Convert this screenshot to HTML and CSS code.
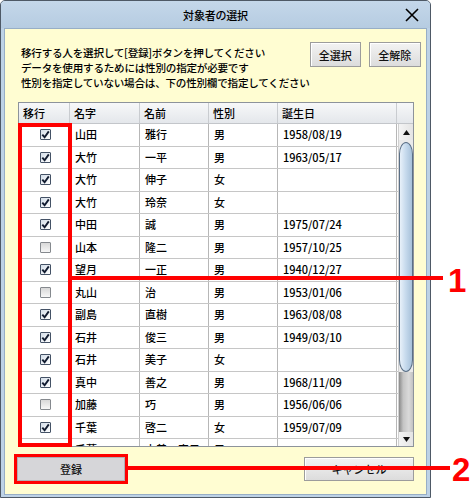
FILE: index.html
```html
<!DOCTYPE html>
<html lang="ja">
<head>
<meta charset="utf-8">
<title>対象者の選択</title>
<link rel="stylesheet" href="styles.css">
</head>
<body>
<div class="stage">
  <div class="window">
    <div class="titlebar">
      <span></span>
      <span class="title">対象者の選択</span>
      <span class="close"><svg width="14" height="14" viewBox="0 0 14 14"><path d="M1 1L13 13M13 1L1 13" stroke="#000" stroke-width="1.6" fill="none"/></svg></span>
    </div>
    <div class="content">
      <div class="top">
        <div class="intro">
          <p>移行する人を選択して[登録]ボタンを押してください</p>
          <p>データを使用するためには性別の指定が必要です</p>
          <p>性別を指定していない場合は、下の性別欄で指定してください</p>
        </div>
        <div class="topbtns">
          <button class="btn btn-sm">全選択</button>
          <button class="btn btn-sm">全解除</button>
        </div>
      </div>
      <div class="list">
        <div class="thead">
          <div class="c">移行</div><div class="c">名字</div><div class="c">名前</div><div class="c">性別</div><div class="c">誕生日</div><div class="c sbh"></div>
        </div>
        <div class="tbody">
          <div class="rows">
            <div class="row"><div class="c cbc"><span class="cb on"><svg viewBox="0 0 9 9"><path d="M1.3 4.6L3.6 7.2L7.8 1.4"/></svg></span></div><div class="c">山田</div><div class="c">雅行</div><div class="c">男</div><div class="c">1958/08/19</div></div>
            <div class="row"><div class="c cbc"><span class="cb on"><svg viewBox="0 0 9 9"><path d="M1.3 4.6L3.6 7.2L7.8 1.4"/></svg></span></div><div class="c">大竹</div><div class="c">一平</div><div class="c">男</div><div class="c">1963/05/17</div></div>
            <div class="row"><div class="c cbc"><span class="cb on"><svg viewBox="0 0 9 9"><path d="M1.3 4.6L3.6 7.2L7.8 1.4"/></svg></span></div><div class="c">大竹</div><div class="c">伸子</div><div class="c">女</div><div class="c"></div></div>
            <div class="row"><div class="c cbc"><span class="cb on"><svg viewBox="0 0 9 9"><path d="M1.3 4.6L3.6 7.2L7.8 1.4"/></svg></span></div><div class="c">大竹</div><div class="c">玲奈</div><div class="c">女</div><div class="c"></div></div>
            <div class="row"><div class="c cbc"><span class="cb on"><svg viewBox="0 0 9 9"><path d="M1.3 4.6L3.6 7.2L7.8 1.4"/></svg></span></div><div class="c">中田</div><div class="c">誠</div><div class="c">男</div><div class="c">1975/07/24</div></div>
            <div class="row"><div class="c cbc"><span class="cb"></span></div><div class="c">山本</div><div class="c">隆二</div><div class="c">男</div><div class="c">1957/10/25</div></div>
            <div class="row"><div class="c cbc"><span class="cb on"><svg viewBox="0 0 9 9"><path d="M1.3 4.6L3.6 7.2L7.8 1.4"/></svg></span></div><div class="c">望月</div><div class="c">一正</div><div class="c">男</div><div class="c">1940/12/27</div></div>
            <div class="row"><div class="c cbc"><span class="cb"></span></div><div class="c">丸山</div><div class="c">治</div><div class="c">男</div><div class="c">1953/01/06</div></div>
            <div class="row"><div class="c cbc"><span class="cb on"><svg viewBox="0 0 9 9"><path d="M1.3 4.6L3.6 7.2L7.8 1.4"/></svg></span></div><div class="c">副島</div><div class="c">直樹</div><div class="c">男</div><div class="c">1963/08/08</div></div>
            <div class="row"><div class="c cbc"><span class="cb on"><svg viewBox="0 0 9 9"><path d="M1.3 4.6L3.6 7.2L7.8 1.4"/></svg></span></div><div class="c">石井</div><div class="c">俊三</div><div class="c">男</div><div class="c">1949/03/10</div></div>
            <div class="row"><div class="c cbc"><span class="cb on"><svg viewBox="0 0 9 9"><path d="M1.3 4.6L3.6 7.2L7.8 1.4"/></svg></span></div><div class="c">石井</div><div class="c">美子</div><div class="c">女</div><div class="c"></div></div>
            <div class="row"><div class="c cbc"><span class="cb on"><svg viewBox="0 0 9 9"><path d="M1.3 4.6L3.6 7.2L7.8 1.4"/></svg></span></div><div class="c">真中</div><div class="c">善之</div><div class="c">男</div><div class="c">1968/11/09</div></div>
            <div class="row"><div class="c cbc"><span class="cb"></span></div><div class="c">加藤</div><div class="c">巧</div><div class="c">男</div><div class="c">1956/06/06</div></div>
            <div class="row"><div class="c cbc"><span class="cb on"><svg viewBox="0 0 9 9"><path d="M1.3 4.6L3.6 7.2L7.8 1.4"/></svg></span></div><div class="c">千葉</div><div class="c">啓二</div><div class="c">女</div><div class="c">1959/07/09</div></div>
            <div class="row"><div class="c cbc"><span class="cb on"><svg viewBox="0 0 9 9"><path d="M1.3 4.6L3.6 7.2L7.8 1.4"/></svg></span></div><div class="c">千葉</div><div class="c">由美　恵子</div><div class="c">男</div><div class="c"></div></div>
          </div>
          <div class="scrollbar">
            <div class="sb-btn"><svg width="7" height="5" viewBox="0 0 7 5"><path d="M3.5 0L7 5H0Z" fill="#111"/></svg></div>
            <div class="sb-thumb"></div>
            <div class="sb-track"></div>
            <div class="sb-btn sb-down"><svg width="7" height="5" viewBox="0 0 7 5"><path d="M0 0H7L3.5 5Z" fill="#111"/></svg></div>
          </div>
        </div>
      </div>
      <div class="bottom">
        <button class="btn btn-lg btn-ok">登録</button>
        <button class="btn btn-lg">キャンセル</button>
      </div>
    </div>
  </div>
  <div class="anno-box"></div>
  <div class="anno-line anno-line1"></div>
  <div class="anno-num anno-num1">1</div>
  <div class="anno-line anno-line2"></div>
  <div class="anno-num anno-num2">2</div>
</div>
</body>
</html>
```
FILE: styles.css
```css
* { box-sizing: border-box; }
body {
  margin: 0;
  background: #fff;
  font-family: "Noto Sans CJK JP", "Noto Sans", sans-serif;
  color: #000;
}
.stage { position: relative; width: 470px; height: 499px; }

.window {
  width: 431px;
  height: 498px;
  border: 1px solid #4e5966;
  border-radius: 5px 5px 0 0;
  background: #bdd2e6;
  padding: 0 3px 2px 3px;
  display: flex;
  flex-direction: column;
}
.titlebar {
  height: 27px;
  display: grid;
  grid-template-columns: 1fr auto 1fr;
  align-items: center;
  font-size: 11px;
  line-height: 14px;
  background: linear-gradient(#c4d7ea, #b6cce1);
  margin: 0 -3px;
  padding: 0 3px;
  border-radius: 4px 4px 0 0;
  font-weight: 500;
}
.title { letter-spacing: -0.2px; }
.close { justify-self: end; margin-right: 8px; display: flex; }

.content {
  flex: 1;
  background: #fffdd2;
  border: 1px solid #97aec6;
  padding: 13px 12px 0 13px;
  display: flex;
  flex-direction: column;
}
.top {
  height: 60px;
  display: flex;
  justify-content: space-between;
}
.intro {
  margin: 3px 0 0 3px;
  font-size: 10.6px;
  line-height: 15px;
  letter-spacing: -0.25px;
  font-weight: 500;
}
.intro p { margin: 0; white-space: nowrap; }
.topbtns { display: flex; gap: 8px; margin-right: 1px; }

.btn {
  font-family: inherit;
  font-size: 11px;
  font-weight: 500;
  color: #111;
  border: 1px solid #9c9c9c;
  background: linear-gradient(#f3f3f3, #dcdcdc);
  box-shadow: inset 1px 1px 0 #fff;
  padding: 0;
  margin: 0;
}
.btn-sm { width: 51px; height: 25px; }
.topbtns .btn-sm + .btn-sm { width: 52px; }
.btn-lg { width: 110px; height: 24px; }

.list {
  height: 345px;
  border: 1px solid #8d939b;
  background: #fff;
  display: flex;
  flex-direction: column;
  font-size: 11px;
  font-weight: 500;
}
.thead {
  height: 21px;
  display: grid;
  grid-template-columns: 51px 70px 69px 69px 119px 1fr;
  background: linear-gradient(#f7f8f9, #e4e7eb);
  border-bottom: 1px solid #c3c6ca;
}
.thead .c {
  border-right: 1px solid #c9ccd0;
  padding-left: 4px;
  line-height: 20px;
}
.thead .sbh { border-right: 0; }
.tbody { flex: 1; display: flex; min-height: 0; }
.rows { flex: 1; overflow: hidden; }
.row {
  height: 22.5px;
  display: grid;
  grid-template-columns: 51px 70px 69px 69px 119px;
  border-bottom: 1px solid #c6c6c6;
}
.row .c {
  border-right: 1px solid #b7b7b7;
  padding-left: 5px;
  line-height: 21px;
  white-space: nowrap;
  overflow: hidden;
}
.row .cbc {
  padding: 0;
  display: flex;
  justify-content: center;
  align-items: center;
  padding-left: 2px;
}
.cb {
  width: 11px;
  height: 11px;
  border: 1px solid #85898e;
  border-radius: 1px;
  background: linear-gradient(#d8d8d8, #f7f7f7);
  display: flex;
}
.cb.on {
  border-color: #445266;
  background: linear-gradient(135deg, #d3dde8, #ffffff);
}
.cb svg { width: 9px; height: 9px; }
.cb path { fill: none; stroke: #111b30; stroke-width: 1.9; }

.scrollbar {
  width: 15px;
  display: flex;
  flex-direction: column;
  background: #eaeaea;
  border-left: 1px solid #d0d0d0;
}
.sb-btn {
  height: 16px;
  display: flex;
  align-items: center;
  justify-content: center;
  background: linear-gradient(90deg, #f4f4f4, #e4e4e4);
}
.sb-down { height: 14px; }
.sb-thumb {
  height: 230px;
  margin-top: 2px;
  border: 1px solid #5a6f86;
  border-radius: 7px 7px 7px 7px / 12px 12px 12px 12px;
  background: linear-gradient(90deg, #e8f1fa, #c5d9ec 50%, #a7c1da);
}
.sb-track {
  flex: 1;
  background: linear-gradient(90deg, #8a8a8a, #c4c4c4 30%, #dadada 70%, #c2c2c2);
}

.bottom {
  margin-top: 10px;
  display: flex;
  justify-content: space-between;
}
.btn-ok {
  width: 108px;
  margin-left: -1px;
  background: #d6d6d9;
  box-shadow: none;
  border-color: #b0b0b4;
  outline: 3px solid #ff0000;
}

.anno-box {
  position: absolute;
  left: 18px;
  top: 123px;
  width: 54px;
  height: 324px;
  border: 4px solid #ff0000;
}
.anno-line {
  position: absolute;
  height: 4px;
  background: #ff0000;
}
.anno-line1 { left: 72px; top: 276px; width: 371px; }
.anno-line2 { left: 128px; top: 466px; width: 322px; }
.anno-num {
  position: absolute;
  font-family: "Liberation Sans", Arial, sans-serif;
  font-weight: bold;
  font-size: 33px;
  line-height: 33px;
  color: #ff0000;
}
.anno-num1 { left: 448px; top: 264px; }
.anno-num2 { left: 452px; top: 453px; }
```
